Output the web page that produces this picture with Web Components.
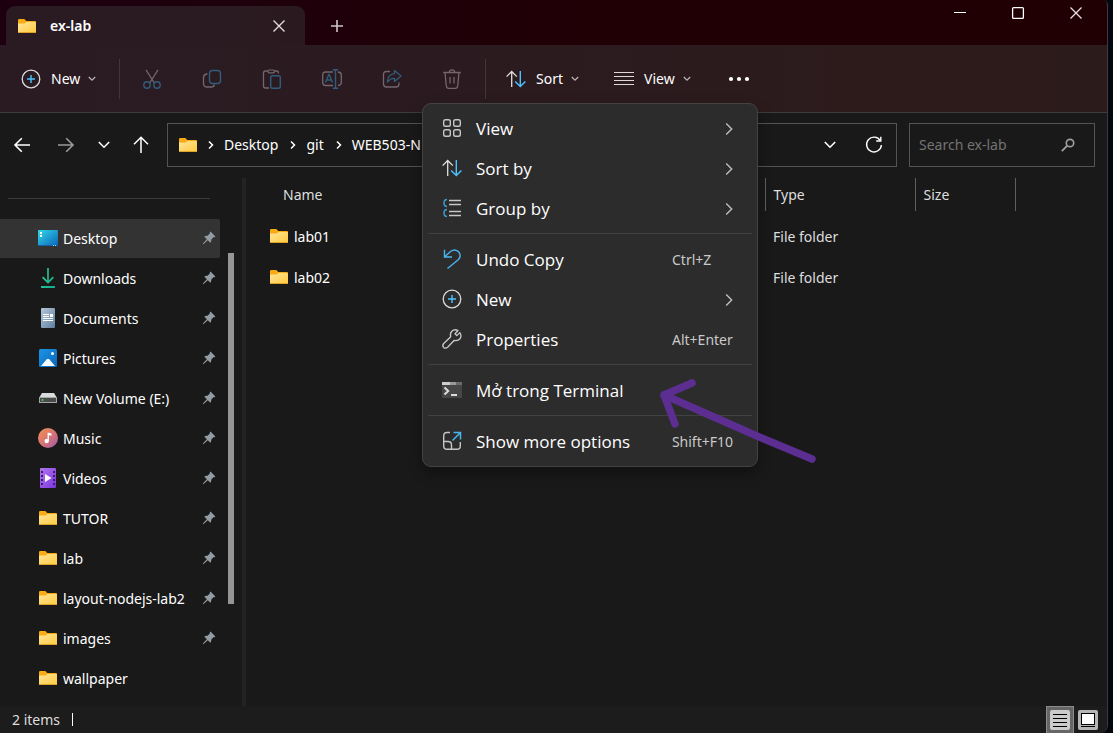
<!DOCTYPE html>
<html lang="en">
<head>
<meta charset="utf-8">
<title>ex-lab</title>
<style>
  html { background: #04070d; }
  body { margin: 0; font-family: "Noto Sans", "Open Sans", sans-serif; font-size: 14px; line-height: 20px; color: #fff; }
</style>
</head>
<body>
<explorer-window>
  <title-bar slot="title" label="ex-lab"></title-bar>
  <command-bar slot="commands"></command-bar>
  <address-bar slot="address"></address-bar>
  <nav-pane slot="nav">
    <nav-item icon="desktop" pinned selected>Desktop</nav-item>
    <nav-item icon="downloads" pinned>Downloads</nav-item>
    <nav-item icon="documents" pinned>Documents</nav-item>
    <nav-item icon="pictures" pinned>Pictures</nav-item>
    <nav-item icon="drive" pinned>New Volume (E:)</nav-item>
    <nav-item icon="music" pinned>Music</nav-item>
    <nav-item icon="videos" pinned>Videos</nav-item>
    <nav-item icon="folder" pinned>TUTOR</nav-item>
    <nav-item icon="folder" pinned>lab</nav-item>
    <nav-item icon="folder" pinned>layout-nodejs-lab2</nav-item>
    <nav-item icon="folder" pinned>images</nav-item>
    <nav-item icon="folder">wallpaper</nav-item>
  </nav-pane>
  <file-list slot="files"></file-list>
  <status-bar slot="status">2 items</status-bar>
  <context-menu slot="overlay">
    <menu-item icon="grid" submenu>View</menu-item>
    <menu-item icon="sort" submenu>Sort by</menu-item>
    <menu-item icon="group" submenu>Group by</menu-item>
    <menu-line></menu-line>
    <menu-item icon="undo" keys="Ctrl+Z">Undo Copy</menu-item>
    <menu-item icon="plus" submenu>New</menu-item>
    <menu-item icon="wrench" keys="Alt+Enter">Properties</menu-item>
    <menu-line></menu-line>
    <menu-item icon="terminal">Mở trong Terminal</menu-item>
    <menu-line></menu-line>
    <menu-item icon="more" keys="Shift+F10">Show more options</menu-item>
  </context-menu>
  <pen-arrow slot="overlay"></pen-arrow>
</explorer-window>

<script>
const ICONS = {
  folder: [20, 16, `<defs><linearGradient id="g" x1="0" y1="0" x2="1" y2="1"><stop offset="0" stop-color="#ffe69b"/><stop offset="1" stop-color="#ffc93c"/></linearGradient></defs><path d="M1 2.2Q1 1 2.2 1H7.3L9.3 3H18Q19 3 19 4V14H1Z" fill="#f8ab12"/><path d="M1 5.6H7.6L9.6 4H18Q19 4 19 5V13.6Q19 15 17.8 15H2.2Q1 15 1 13.6Z" fill="url(#g)"/><path d="M1 14.5H19" stroke="#e0a32a"/>`],
  desktop: [20, 16, `<defs><linearGradient id="g" x1="0" y1="0" x2="1" y2="1"><stop offset="0" stop-color="#33d8ea"/><stop offset="1" stop-color="#0c62b8"/></linearGradient></defs><rect width="20" height="16" rx="1" fill="url(#g)"/><path d="M2 2h2v2H2zM2 5h2v2H2z" fill="#fff"/><path d="M0 15.5H20" stroke="#1461a6"/><path d="M15 15h1v1h-1zM17 15h1v1h-1z" fill="#7ce1ff"/>`],
  downloads: [20, 20, `<defs><linearGradient id="g" x1="0" y1="0" x2="1" y2="1"><stop offset="0" stop-color="#3ad68f"/><stop offset="1" stop-color="#13a893"/></linearGradient></defs><path d="M9.2 0h1.600v12.500l4-4 1.200 1.200-6 6-6-6 1.200-1.200 4 4zM3 18h14v2H3z" fill="url(#g)"/>`],
  documents: [20, 20, `<defs><linearGradient id="g" x1="0" y1="0" x2="1" y2="1"><stop offset="0" stop-color="#b5c7d9"/><stop offset="1" stop-color="#5f7f9f"/></linearGradient></defs><rect x="3" width="14" height="20" rx="1" fill="url(#g)"/><path d="M5 6.5h6M5 8.5h6M5 10.5h10M5 12.5h10" stroke="#fff"/><path d="M12 6h3v3h-3z" fill="#fff"/>`],
  pictures: [20, 20, `<defs><linearGradient id="g" x1="0" y1="0" x2="1" y2="1"><stop offset="0" stop-color="#1c95e6"/><stop offset="1" stop-color="#0866bd"/></linearGradient></defs><rect x="1" y="1" width="18" height="18" rx="1.5" fill="url(#g)"/><path d="M3 18l5.5-6.5q1.500-1.500 3 0L17 18z" fill="#f4faff"/><circle cx="14.5" cy="5.5" r="1.5" fill="#fff"/>`],
  drive: [20, 12, `<path d="M4 1H16L19 6H1Z" fill="#d9dcdd"/><rect x="1.5" y="5.500" width="17" height="5" fill="#4a4a4a" stroke="#a4a6a8"/><circle cx="4.5" cy="8" r="1" fill="#36e04b"/>`],
  music: [20, 20, `<defs><linearGradient id="g" x1="0" y1="0" x2="1" y2="1"><stop offset=".1" stop-color="#f08c55"/><stop offset=".6" stop-color="#d0707c"/><stop offset="1" stop-color="#9a58b5"/></linearGradient></defs><circle cx="10" cy="10" r="10" fill="url(#g)"/><circle cx="8.7" cy="13" r="2.2" fill="#fff"/><path d="M9.6 13V4.500l3.900 1v2.300l-2.600-.6V13z" fill="#fff"/>`],
  videos: [20, 20, `<defs><linearGradient id="g" x1="0" y1="0" x2="1" y2="1"><stop offset="0" stop-color="#b277f0"/><stop offset="1" stop-color="#7b35dc"/></linearGradient></defs><rect x="2" width="16" height="20" rx="1" fill="url(#g)"/><path d="M3 3h2v2H3zM3 7h2v2H3zM3 11h2v2H3zM3 15h2v2H3zM15 3h2v2h-2zM15 7h2v2h-2zM15 11h2v2h-2zM15 15h2v2h-2z" fill="#3b1c72"/><path d="M7 6l6.500 4L7 14z" fill="#fff"/>`],
  pin: [14, 14, `<path d="M8.500.6L13.400 5.500 12.600 6.300 11.800 6 9.300 8.500Q9.600 10.500 8.300 11.700L5.800 9.200 1.300 13.300.7 12.700 4.800 8.200 2.300 5.700Q3.500 4.400 5.500 4.700L8 2.200 7.700 1.400Z" fill="#929ca3"/>`],
  close: [14, 14, `<path d="M1.500 1.500l11 11m0-11l-11 11" stroke="#e6e0e2" stroke-width="1.3"/>`],
  minimize: [14, 14, `<path d="M1 6.500h12" stroke="#fff"/>`],
  maximize: [14, 14, `<rect x="1.600" y="1.600" width="10.800" height="10.800" rx="1" stroke="#fff" stroke-width="1.3"/>`],
  add: [14, 14, `<path d="M7 1v12M1 7h12" stroke="#cfc5c9" stroke-width="1.6"/>`],
  plus: [20, 20, `<circle cx="10" cy="10" r="8.8" stroke="#dadada" stroke-width="1.3"/><path d="M10 6v8M6 10h8" stroke="#4cc2ff" stroke-width="1.4"/>`],
  cut: [20, 20, `<path d="M4 .8l8.300 13.200M16 .8L7.700 14" stroke="#73666d" stroke-width="1.3"/><circle cx="5" cy="16" r="3.2" stroke="#315c7c" stroke-width="1.4"/><circle cx="15" cy="16" r="3.2" stroke="#315c7c" stroke-width="1.4"/>`],
  copy: [20, 20, `<path d="M5.500 5H4.500Q1.500 5.500 1.500 8.500V14.500Q1.500 18 5 18H9.500Q12 18 12.500 15.500" stroke="#73666d" stroke-width="1.3"/><rect x="7.5" y="1.5" width="11" height="13" rx="3" stroke="#315c7c" stroke-width="1.4"/>`],
  paste: [20, 20, `<path d="M6 2H3.500Q1.500 2 1.500 4V17Q1.500 19 3.500 19H7M12 2h2.500q2 0 2 2v.5" stroke="#73666d" stroke-width="1.3"/><rect x="6" y="1" width="6.5" height="2.8" rx="1.4" stroke="#73666d" stroke-width="1.2"/><rect x="8.7" y="6.7" width="9.6" height="12.6" rx="1.8" stroke="#315c7c" stroke-width="1.4"/>`],
  rename: [20, 20, `<path d="M11 3H3.500Q.7 3 .7 6V13.500Q.7 16.500 3.500 16.500H11M16 3q3.300.3 3.300 3v7.500q0 2.700-3.300 3" stroke="#73666d" stroke-width="1.3"/><path d="M3.500 13.500l3.300-8h.4l3.300 8M4.700 11h4.600M13.500.8v18.400M10.800.7h5.400M10.800 19.300h5.400" stroke="#315c7c" stroke-width="1.4"/>`],
  share: [20, 20, `<path d="M8 2.500H4.500Q1.500 2.500 1.500 5.500V15Q1.500 18 4.500 18H14Q17 18 17 15V13.500" stroke="#73666d" stroke-width="1.3"/><path d="M12.500 1.500L19 7l-6.500 5.500V9.300Q8.500 9 5.500 13 5.500 5.500 12.500 4.700Z" stroke="#315c7c" stroke-width="1.3" stroke-linejoin="round"/>`],
  trash: [20, 20, `<path d="M1.200 3.500H18.800M7.300 3.500Q7.300.8 10 .8T12.700 3.500M3 3.500L4.300 17Q4.500 19.300 6.700 19.300H13.300Q15.500 19.300 15.700 17L17 3.500M8 8v6.500M12 8v6.500" stroke="#73666d" stroke-width="1.3"/>`],
  sort: [20, 18, `<path d="M5.700 17V1.500M.6 6.600l5.100-5.100 5.100 5.100" stroke="#e2dede" stroke-width="1.3"/><path d="M14.300 1v15.500M9.200 11.400l5.100 5.100 5.100-5.100" stroke="#4cc2ff" stroke-width="1.4"/>`],
  lines: [20, 14, `<path d="M0 .5h20M0 4.500h20M0 8.500h20M0 12.500h20" stroke="#ded8d8" stroke-width="1.2"/>`],
  dots: [22, 6, `<circle cx="3" cy="3" r="2.1" fill="#fff"/><circle cx="11" cy="3" r="2.1" fill="#fff"/><circle cx="19" cy="3" r="2.1" fill="#fff"/>`],
  caret: [8, 6, `<path d="M.8 1l3.200 3.200L7.200 1" stroke="#bdb4b7" stroke-width="1.2"/>`],
  down: [14, 10, `<path d="M1.800 2L7 7.200 12.200 2" stroke="#fff" stroke-width="1.6"/>`],
  back: [18, 16, `<path d="M17 8H2M8.800 1.200L2 8 8.800 14.800" stroke="#fff" stroke-width="1.6"/>`],
  forward: [18, 16, `<path d="M1 8h15M9.200 1.200L16 8 9.200 14.800" stroke="#9b9b9b" stroke-width="1.6"/>`],
  up: [16, 18, `<path d="M8 17V1.500M1 8.200L8 1.300l7 6.900" stroke="#fff" stroke-width="1.5"/>`],
  crumb: [6, 10, `<path d="M1 1.500L4.500 5 1 8.500" stroke="#fff" stroke-width="1.5"/>`],
  refresh: [18, 18, `<path d="M15.300 4.600A7.400 7.400 0 1 0 16.400 9" stroke="#fff" stroke-width="1.4"/><path d="M15.800 .8V5H11.200" stroke="#fff" stroke-width="1.4"/>`],
  search: [14, 14, `<circle cx="9" cy="5" r="3.7" stroke="#9d9d9d" stroke-width="1.7"/><path d="M6.300 7.700L.8 13.200" stroke="#9d9d9d" stroke-width="1.9"/>`],
  grid: [20, 20, `<g stroke="#c6c6c6" stroke-width="1.4"><rect x="1.700" y="1.700" width="6.600" height="6.600" rx="1.800"/><rect x="11.700" y="1.700" width="6.600" height="6.600" rx="1.800"/><rect x="1.700" y="11.700" width="6.600" height="6.600" rx="1.800"/><rect x="11.700" y="11.700" width="6.600" height="6.600" rx="1.800"/></g>`],
  group: [20, 20, `<path d="M5 1.500Q2 1.500 2 5T5 8.500M5 11.500Q2 11.500 2 15T5 18.500" stroke="#3f9ccb" stroke-width="1.5"/><path d="M7 2.500h12M7 6.500h12M7 13.500h12M7 17.500h12" stroke="#c6c6c6" stroke-width="1.3"/>`],
  undo: [20, 20, `<path d="M2.500.8V8H10M2.700 7.800L8.500 2.500Q13.500-.8 17 3.300 19.500 7 16.500 10.500L5.500 19.500" stroke="#49b5ee" stroke-width="1.4"/>`],
  wrench: [20, 20, `<path d="M17.800 3.600L14.800 6.600 13 4.800 16 1.500Q12.500-.3 9.800 2.300 7.800 4.500 8.700 7.700L1.700 14.500Q-.1 16.600 1.600 18.400 3.500 20 5.600 18.200L12.300 11.300Q15.500 12.300 17.800 10 20.100 7.200 17.800 3.600Z" stroke="#cacaca" stroke-width="1.3" stroke-linejoin="round"/>`],
  terminal: [20, 16, `<rect width="20" height="16" fill="#464646"/><path d="M0 0h8v3H0z" fill="#cdcdcd"/><path d="M8 0h6v3H8z" fill="#999"/><path d="M14 0h6v3h-6z" fill="#6b6b6b"/><path d="M2.500 5.500L6.200 9 2.500 12.500" stroke="#dcdcdc" stroke-width="2"/><path d="M9 13h6" stroke="#eee" stroke-width="1.8"/>`],
  more: [20, 20, `<path d="M8 1.500H5Q1.700 1.500 1.700 5V14.700Q1.700 18.300 5 18.300H15Q18.300 18.300 18.300 15V11M1.700 10.500H6Q9.500 10.500 9.500 14V18.300" stroke="#c6c6c6" stroke-width="1.4"/><path d="M10.500 9.500L18 2M11.500 1.500H18.500V8.500" stroke="#49b5ee" stroke-width="1.5"/>`],
  next: [8, 14, `<path d="M1.200 1.500L6.700 7 1.200 12.500" stroke="#bebebe" stroke-width="1.4"/>`],
  details: [20, 20, `<rect width="20" height="20" rx="2" fill="#cbcbcb"/><path d="M3 4.500h14M3 8.500h14M3 12.500h14M3 16.500h14" stroke="#000"/>`],
  preview: [20, 20, `<rect width="20" height="20" rx="2" fill="#b5b5b5"/><rect x="3.500" y="3.500" width="13" height="11" fill="#fff" stroke="#000"/><path d="M3 16.500h14" stroke="#000"/>`]
};

const RESET = `:host,*{box-sizing:border-box} button{font:inherit;color:inherit;background:none;border:0;padding:0;margin:0;display:flex;align-items:center} a{color:inherit;text-decoration:none}`;

function define(name, css, html) {
  customElements.define(name, class extends HTMLElement {
    constructor() {
      super();
      this.attachShadow({ mode: "open" });
    }
    connectedCallback() {
      const body = typeof html === "function" ? html(this) : html;
      this.shadowRoot.innerHTML = `<style>${RESET}${css}</style>${body}`;
    }
  });
}
const icon = name => `<ui-icon name="${name}"></ui-icon>`;

define("ui-icon", `:host{display:block;flex:none} svg{display:block;overflow:visible}`, el => {
  const [w, h, body] = ICONS[el.getAttribute("name")];
  return `<svg width="${w}" height="${h}" viewBox="0 0 ${w} ${h}" fill="none" aria-hidden="true">${body}</svg>`;
});

define("explorer-window", `
  :host{display:block;padding-right:5px}
  .window{position:relative;display:flex;flex-direction:column;min-height:100vh;background:#191919;border-right:1px solid #3a3b3e;border-radius:0 5px 8px 0;overflow:hidden}
  .body{flex:1;display:flex}
  slot[name=files]::slotted(*){flex:1}
`, `<div class="window">
  <slot name="title"></slot><slot name="commands"></slot><slot name="address"></slot>
  <div class="body"><slot name="nav"></slot><slot name="files"></slot></div>
  <slot name="status"></slot><slot name="overlay"></slot></div>`);

define("title-bar", `
  :host{display:flex;height:45px;padding:0 2px 0 6px;background:linear-gradient(90deg,#1d0010,#200006 50%,#200002)}
  .tab{display:flex;align-items:center;width:299px;margin-top:6px;padding:0 19px 0 11px;background:linear-gradient(90deg,#2a1b23,#2a1a20);border-radius:9px 9px 0 0}
  .name{flex:1;margin-left:13px;font-weight:600}
  .new{margin-left:25px;padding-top:6px}
  .spacer{flex:1}
  .caption{width:58px;height:26px;justify-content:center}
`, el => `<div class="tab">${icon("folder")}<span class="name">${el.getAttribute("label")}</span><button aria-label="Close tab">${icon("close")}</button></div>
  <button class="new" aria-label="New tab">${icon("add")}</button><div class="spacer"></div>
  <button class="caption" aria-label="Minimize">${icon("minimize")}</button>
  <button class="caption" aria-label="Maximize">${icon("maximize")}</button>
  <button class="caption" aria-label="Close">${icon("close")}</button>`);

define("command-bar", `
  :host{display:flex;align-items:center;height:68px;padding-left:21px;background:linear-gradient(90deg,#2a1b23,#2b1b1f 50%,#2d1b1b 85%,#2b1b1a);border-bottom:1px solid #3c3c3c}
  .text{gap:10px}
  .text ui-icon:last-child{margin-left:-2px}
  .tool{width:60px;height:40px;justify-content:center}
  .line{width:1px;height:40px;background:#42343a}
  .new{width:98px}
  .sort{width:108px;margin-left:20px}
  .view{width:114px}
  .group{display:flex;padding:0 3px 0 2px}
`, `<button class="text new">${icon("plus")}<span>New</span>${icon("caret")}</button><span class="line"></span>
  <div class="group">${[["cut","Cut"],["copy","Copy"],["paste","Paste"],["rename","Rename"],["share","Share"],["trash","Delete"]].map(([n, t]) => `<button class="tool" aria-label="${t}">${icon(n)}</button>`).join("")}</div>
  <span class="line"></span>
  <button class="text sort">${icon("sort")}<span>Sort</span>${icon("caret")}</button>
  <button class="text view">${icon("lines")}<span>View</span>${icon("caret")}</button>
  <button aria-label="See more">${icon("dots")}</button>`);

define("address-bar", `
  :host{display:flex;align-items:center;height:65px;padding:10px 12px 11px 0}
  button{justify-content:center;height:40px}
  .wide{width:44px} .small{width:32px} .up{width:42px}
  .path,.search{display:flex;align-items:center;height:44px;border:1px solid #535353}
  .path{flex:1;margin:0 12px 0 5px;padding:0 0 0 10px}
  nav{flex:1;display:flex;align-items:center;gap:10px}
  nav a{margin-right:2px}
  .search{width:186px;padding:0 19px 0 9px}
  input{flex:1;min-width:0;padding:0;border:0;outline:0;background:none;color:#fff;font:inherit}
  input::placeholder{color:#747474;opacity:1}
`, `<button class="wide" aria-label="Back">${icon("back")}</button><button class="wide" aria-label="Forward">${icon("forward")}</button>
  <button class="small" aria-label="Recent">${icon("down")}</button><button class="up" aria-label="Up">${icon("up")}</button>
  <div class="path"><nav aria-label="Path">${icon("folder")}${icon("crumb")}<a href="#">Desktop</a>${icon("crumb")}<a href="#">git</a>${icon("crumb")}<a href="#">WEB503-N</a></nav>
  <button class="wide" aria-label="Previous locations">${icon("down")}</button><button class="wide" aria-label="Refresh">${icon("refresh")}</button></div>
  <label class="search"><input type="text" placeholder="Search ex-lab" aria-label="Search ex-lab">${icon("search")}</label>`);

define("nav-pane", `
  :host{display:flex;width:246px;border-right:4px solid #232323}
  .items{width:220px}
  hr{height:1px;margin:20px 10px 20px 8px;border:0;background:#3b3b3b}
  .bar{width:6px;height:351px;margin:75px 0 0 8px;background:#959595}
`, `<div class="items"><hr><slot></slot></div><div class="bar"></div>`);

define("nav-item", `
  :host{display:block;height:40px}
  a{display:flex;align-items:center;height:39px;padding:0 4px 0 38px;border-radius:0 2px 2px 0}
  ui-icon{margin-bottom:2px}
  :host([selected]) a{background:#333}
  span{flex:1;margin-left:5px;white-space:nowrap}
`, el => `<a href="#">${icon(el.getAttribute("icon"))}<span><slot></slot></span>${el.hasAttribute("pinned") ? icon("pin") : ""}</a>`);

define("file-list", `
  :host{display:block}
  table{width:100%;table-layout:fixed;border-collapse:collapse}
  th{height:33px;padding:0 0 0 8px;text-align:left;font-weight:400;color:#dedede;border-right:1px solid #5f5f5f}
  th:first-child{padding-left:37px} th:last-child{border:0}
  tbody::before{content:"";display:block;height:5px}
  td{height:41px;padding:0 0 0 8px;color:#dedede}
  td:first-child{padding-left:23px}
  td a{display:flex;align-items:center;gap:5px;color:#fff}
  td ui-icon{margin-bottom:2px}
  .type{width:150px} .size{width:100px} .rest{width:92px}
`, `<table><colgroup><col><col class="type"><col class="size"><col class="rest"></colgroup>
  <thead><tr><th>Name</th><th>Type</th><th>Size</th><th></th></tr></thead>
  <tbody>${["lab01", "lab02"].map(n => `<tr><td><a href="#">${icon("folder")}${n}</a></td><td>File folder</td><td></td><td></td></tr>`).join("")}</tbody></table>`);

define("status-bar", `
  :host{display:flex;align-items:center;height:27px;padding:0 5px 0 12px;background:#1c1c1c;color:#dedede}
  .line{width:1px;height:13px;margin-left:12px;background:#fff}
  .spacer{flex:1}
  button{width:28px;height:27px;justify-content:center}
  .on{background:#666;border:1px solid #8b8b8b;border-bottom:0}
`, `<slot></slot><span class="line"></span><span class="spacer"></span><button class="on" aria-label="Details view">${icon("details")}</button><button aria-label="Large icons view">${icon("preview")}</button>`);

define("context-menu", `
  :host{position:absolute;left:422px;top:103px;width:336px;padding:5px 5px 4px;background:#2c2c2c;border:1px solid #434343;border-radius:9px;box-shadow:0 6px 14px rgba(0,0,0,.35)}
`, `<slot></slot>`);

define("menu-line", `:host{display:block;height:1px;margin:4px 0 6px;background:#414141}`, ``);

define("menu-item", `
  :host{display:block}
  button{width:100%;height:40px;padding:0 19px 0 14px;text-align:left}
  button>ui-icon{margin-bottom:2px}
  .label{width:196px;margin-left:14px;font-family:"Open Sans","Noto Sans",sans-serif;font-size:17px;line-height:24px;white-space:nowrap}
  .keys{color:#c9c9c9}
  .next{flex:1;display:flex;justify-content:flex-end}
`, el => `<button>${icon(el.getAttribute("icon"))}<span class="label"><slot></slot></span>${el.hasAttribute("keys") ? `<span class="keys">${el.getAttribute("keys")}</span>` : ""}${el.hasAttribute("submenu") ? `<span class="next">${icon("next")}</span>` : ""}</button>`);

define("pen-arrow", `:host{position:absolute;left:656px;top:376px;pointer-events:none} svg{display:block}`,
  `<svg width="164" height="90" viewBox="0 0 164 90" fill="none" aria-hidden="true"><path d="M156 83L108 63 76 49 8 19M36 7L8 19 19 48" stroke="#5c2e91" stroke-width="7.500" stroke-linecap="round" stroke-linejoin="round"/></svg>`);
</script>
</body>
</html>
